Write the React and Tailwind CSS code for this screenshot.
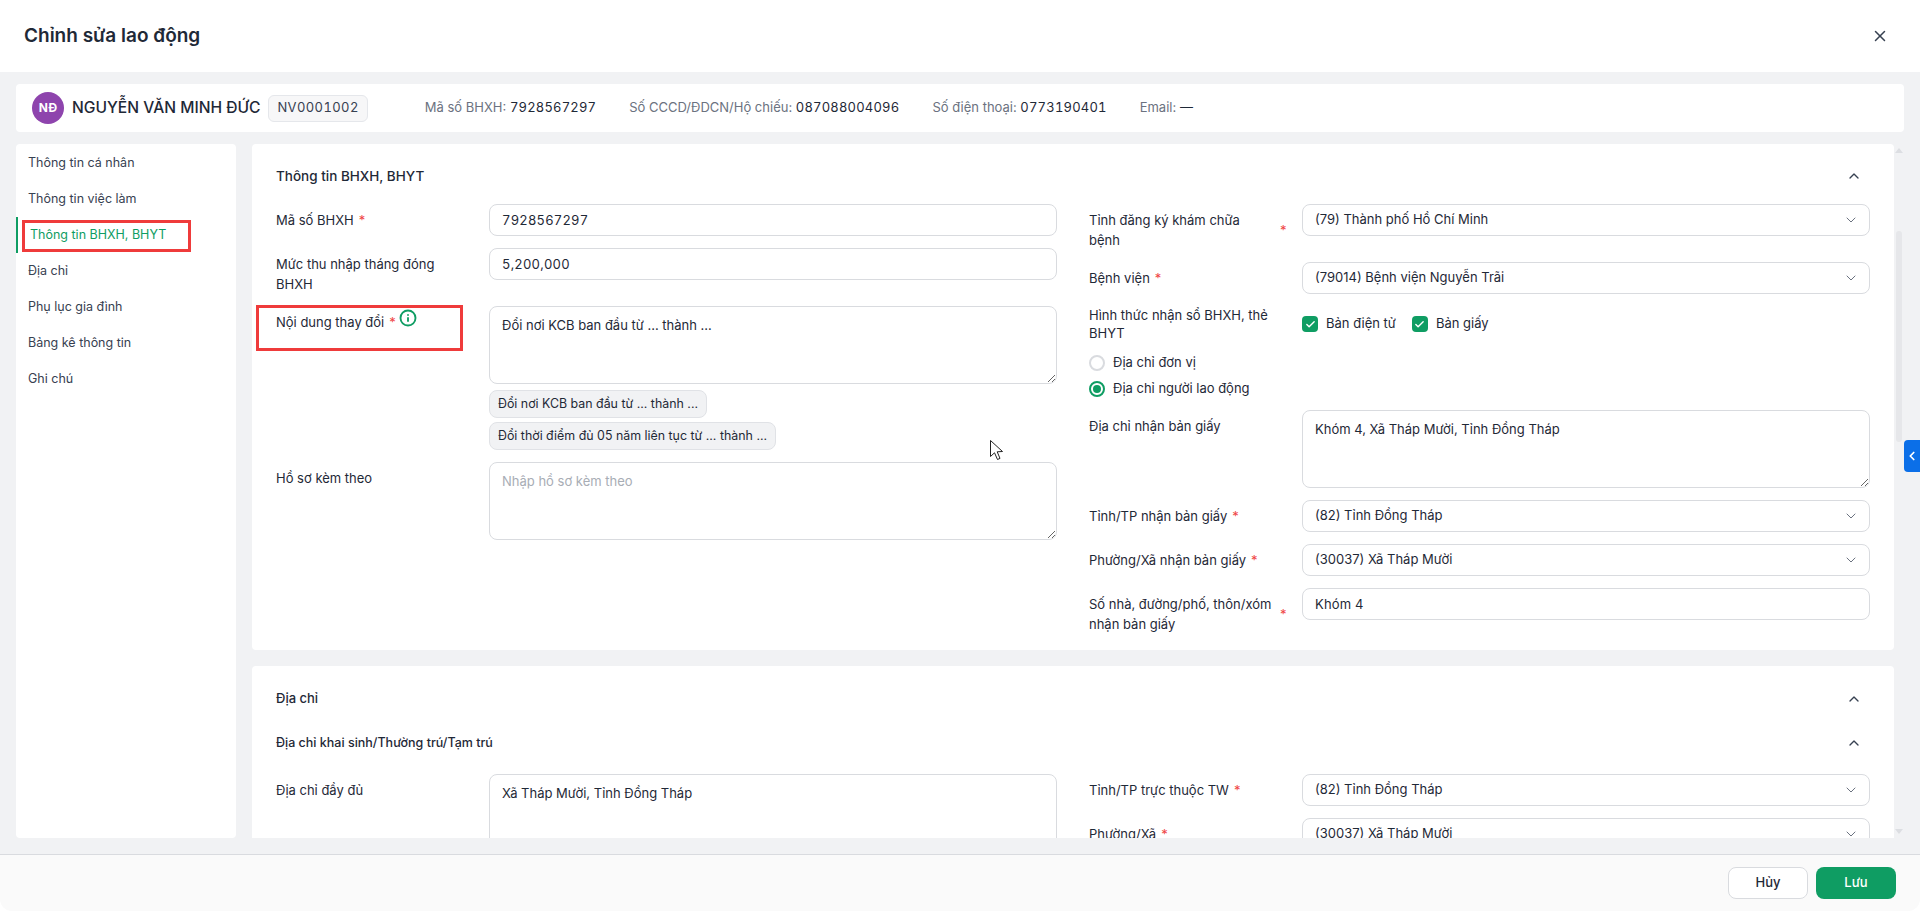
import React from "react";
import { X, ChevronUp, ChevronDown, ChevronLeft, Info, Check } from "lucide-react";

const menu = ["Thông tin cá nhân", "Thông tin việc làm", "Thông tin BHXH, BHYT", "Địa chỉ", "Phụ lục gia đình", "Bảng kê thông tin", "Ghi chú"];

function Label({ text, required, extra, wide }) {
    return (
        <div className="flex items-center self-start pt-1.5 pr-4 text-[13px] leading-5 text-[#1f2937]">
            <span className={wide ? "w-[186px]" : "max-w-[190px]"}>{text}</span>
            {required && <span className="ml-[5px] w-1.5 shrink-0 text-[#ef4444]">*</span>}
            {extra}
        </div>
    );
}

function Row({ label, required, extra, wide, children }) {
    return (
        <div className="grid grid-cols-[213px_1fr]">
            <Label text={label} required={required} extra={extra} wide={wide} />
            <div className="min-w-0">{children}</div>
        </div>
    );
}

function TextInput({ value }) {
    return (
        <input
            readOnly
            value={value}
            className="block h-8 w-full rounded-lg border border-[#d9dbdf] bg-white px-3 text-[13px] tabular-nums tracking-[0.2px] text-[#1f2937] outline-none"
        />
    );
}

function SelectBox({ value }) {
    return (
        <div className="flex h-8 items-center justify-between rounded-lg border border-[#d9dbdf] bg-white pl-3 pr-2.5 text-[13px] text-[#1f2937]">
            <span>{value}</span>
            <ChevronDown size={16} strokeWidth={1.5} className="text-[#6b7280]" />
        </div>
    );
}

function Area({ value, placeholder }) {
    return (
        <textarea
            readOnly
            defaultValue={value}
            placeholder={placeholder}
            className="block h-[78px] w-full rounded-lg border border-[#d9dbdf] bg-white px-3 py-2 text-[13px] leading-5 text-[#1f2937] outline-none placeholder:text-[#a8adb5]"
        />
    );
}

function Chip({ text }) {
    return (
        <div className="flex h-7 w-fit items-center rounded-lg border border-[#e0e2e6] bg-[#f1f2f4] px-2 text-[12.4px] text-[#1f2937]">
            {text}
        </div>
    );
}

function CheckItem({ text }) {
    return (
        <div className="flex items-center gap-2">
            <span className="flex h-4 w-4 items-center justify-center rounded bg-[#0f9d63] text-white">
                <Check size={11} strokeWidth={3} />
            </span>
            <span className="text-[13px] text-[#1f2937]">{text}</span>
        </div>
    );
}

function RadioItem({ text, checked }) {
    return (
        <div className="flex h-[26px] items-center gap-2">
            {checked ? (
                <span className="flex h-4 w-4 items-center justify-center rounded-full border-2 border-[#0f9d63] bg-white">
                    <span className="h-2 w-2 rounded-full bg-[#0f9d63]"></span>
                </span>
            ) : (
                <span className="h-4 w-4 rounded-full border-2 border-[#d9dbdf] bg-white"></span>
            )}
            <span className="text-[13px] text-[#1f2937]">{text}</span>
        </div>
    );
}

function Meta({ label, value }) {
    return (
        <div className="text-[13px] text-[#6b7280]">
            {label}: <span className="tabular-nums tracking-[0.2px] text-[#1f2937]">{value}</span>
        </div>
    );
}

export default function App() {
    return (
        <div className="relative flex h-[911px] flex-col overflow-hidden rounded-b-xl bg-white font-['Inter',sans-serif]">
            <header className="flex h-[72px] shrink-0 items-center justify-between pl-6 pr-[31px]">
                <h1 className="text-[19px] font-semibold text-[#1f2937]">Chỉnh sửa lao động</h1>
                <X size={18} className="text-[#374151]" />
            </header>

            <main className="flex min-h-0 flex-1 flex-col gap-3 bg-[#f1f2f4] px-4 pt-3 pb-4">
                <div className="flex h-12 shrink-0 items-center rounded bg-white pl-4">
                    <span className="flex h-8 w-8 items-center justify-center rounded-full bg-[#8e44ad] text-[12px] font-bold text-white">NĐ</span>
                    <span className="ml-2 text-[15.6px] font-medium text-[#1f2937]">NGUYỄN VĂN MINH ĐỨC</span>
                    <span className="ml-2 flex h-[27px] items-center rounded-md border border-[#e5e7eb] bg-[#f7f7f8] px-2 text-[13px] tabular-nums tracking-[0.4px] text-[#374151]">NV0001002</span>
                    <div className="ml-[57px] flex gap-[33px]">
                        <Meta label="Mã số BHXH" value="7928567297" />
                        <Meta label="Số CCCD/ĐDCN/Hộ chiếu" value="087088004096" />
                        <Meta label="Số điện thoại" value="0773190401" />
                        <Meta label="Email" value="—" />
                    </div>
                </div>

                <div className="flex min-h-0 flex-1 gap-4">
                    <nav className="w-[220px] shrink-0 rounded-sm bg-white pt-px">
                        {menu.map((item, i) => (
                            <div
                                key={item}
                                className={i === 2
                                    ? "flex h-9 items-center border-l-2 border-[#0f9d63] pl-3 text-[12.5px] text-[#0f9d63]"
                                    : "flex h-9 items-center pl-3 text-[12.5px] text-[#374151]"}
                            >
                                {item}
                            </div>
                        ))}
                    </nav>

                    <div className="flex min-h-0 min-w-0 flex-1">
                        <div className="flex min-h-0 min-w-0 flex-1 flex-col gap-4 overflow-hidden">
                            <section className="shrink-0 rounded bg-white px-6 pt-[22px] pb-4">
                                <div className="mb-[18px] flex h-5 items-center justify-between pr-2">
                                    <h2 className="text-[13.5px] font-medium text-[#1f2937]">Thông tin BHXH, BHYT</h2>
                                    <ChevronUp size={16} className="text-[#374151]" />
                                </div>
                                <div className="grid grid-cols-2 items-start gap-x-8">
                                    <div className="flex flex-col gap-3">
                                        <Row label="Mã số BHXH" required><TextInput value="7928567297" /></Row>
                                        <Row label="Mức thu nhập tháng đóng BHXH"><TextInput value="5,200,000" /></Row>
                                        <Row
                                            label="Nội dung thay đổi"
                                            required
                                            extra={<Info size={18} strokeWidth={2.5} className="relative -top-1 ml-1 text-[#0f9d63]" />}
                                        >
                                            <Area value="Đổi nơi KCB ban đầu từ ... thành ..." />
                                            <div className="mt-1.5 flex flex-col gap-1">
                                                <Chip text="Đổi nơi KCB ban đầu từ ... thành ..." />
                                                <Chip text="Đổi thời điểm đủ 05 năm liên tục từ ... thành ..." />
                                            </div>
                                        </Row>
                                        <Row label="Hồ sơ kèm theo"><Area placeholder="Nhập hồ sơ kèm theo" /></Row>
                                    </div>

                                    <div className="flex flex-col gap-3">
                                        <Row label={<>Tỉnh đăng ký khám chữa<br />bệnh</>} required wide><SelectBox value="(79) Thành phố Hồ Chí Minh" /></Row>
                                        <Row label="Bệnh viện" required><SelectBox value="(79014) Bệnh viện Nguyễn Trãi" /></Row>
                                        <div>
                                            <div className="grid grid-cols-[213px_1fr]">
                                                <div className="max-w-[190px] text-[13px] leading-[18px] text-[#1f2937]">Hình thức nhận sổ BHXH, thẻ BHYT</div>
                                                <div className="flex h-9 items-center gap-4">
                                                    <CheckItem text="Bản điện tử" />
                                                    <CheckItem text="Bản giấy" />
                                                </div>
                                            </div>
                                            <div className="mt-2 mb-[-4px]">
                                                <RadioItem text="Địa chỉ đơn vị" />
                                                <RadioItem text="Địa chỉ người lao động" checked />
                                            </div>
                                        </div>
                                        <Row label="Địa chỉ nhận bản giấy"><Area value="Khóm 4, Xã Tháp Mười, Tỉnh Đồng Tháp" /></Row>
                                        <Row label="Tỉnh/TP nhận bản giấy" required><SelectBox value="(82) Tỉnh Đồng Tháp" /></Row>
                                        <Row label="Phường/Xã nhận bản giấy" required><SelectBox value="(30037) Xã Tháp Mười" /></Row>
                                        <Row label="Số nhà, đường/phố, thôn/xóm nhận bản giấy" required wide><TextInput value="Khóm 4" /></Row>
                                    </div>
                                </div>
                            </section>

                            <section className="shrink-0 rounded bg-white px-6 pt-[23px] pb-4">
                                <div className="flex h-5 items-center justify-between pr-2">
                                    <h2 className="text-[13px] font-medium text-[#1f2937]">Địa chỉ</h2>
                                    <ChevronUp size={16} className="text-[#374151]" />
                                </div>
                                <div className="mt-6 mb-[21px] flex h-5 items-center justify-between pr-2">
                                    <h3 className="text-[12.5px] font-medium text-[#1f2937]">Địa chỉ khai sinh/Thường trú/Tạm trú</h3>
                                    <ChevronUp size={16} className="text-[#374151]" />
                                </div>
                                <div className="grid grid-cols-2 items-start gap-x-8">
                                    <Row label="Địa chỉ đầy đủ"><Area value="Xã Tháp Mười, Tỉnh Đồng Tháp" /></Row>
                                    <div className="flex flex-col gap-3">
                                        <Row label="Tỉnh/TP trực thuộc TW" required><SelectBox value="(82) Tỉnh Đồng Tháp" /></Row>
                                        <Row label="Phường/Xã" required><SelectBox value="(30037) Xã Tháp Mười" /></Row>
                                    </div>
                                </div>
                            </section>
                        </div>

                        {/* scrollbar */}
                        <div className="flex w-2.5 shrink-0 flex-col items-center justify-between py-1">
                            <div className="h-0 w-0 border-x-[4px] border-b-[5px] border-x-transparent border-b-[#dcdee2]"></div>
                            <div className="mb-[309px] h-[211px] w-1.5 rounded-full bg-[#e6e7ea]"></div>
                            <div className="h-0 w-0 border-x-[4px] border-t-[5px] border-x-transparent border-t-[#dcdee2]"></div>
                        </div>
                    </div>
                </div>
            </main>

            <footer className="flex h-[57px] shrink-0 items-center justify-end gap-2 border-t border-[#d9dbdf] bg-[#fafafa] pr-6">
                <button className="h-8 w-20 rounded-lg border border-[#d9dbdf] bg-white text-[13px] font-medium text-[#1f2937]">Hủy</button>
                <button className="h-8 w-20 rounded-lg bg-[#0f9d63] text-[13px] font-medium text-white">Lưu</button>
            </footer>

            {/* annotations over the screenshot */}
            <div className="absolute left-[22px] top-[220px] h-[32px] w-[169px] border-[3px] border-[#ef3b3b]"></div>
            <div className="absolute left-[256px] top-[305px] h-[46px] w-[207px] border-[3px] border-[#ef3b3b]"></div>

            <div className="absolute right-0 top-[440px] flex h-8 w-4 items-center justify-center rounded-l bg-[#0b6fe8] text-white">
                <ChevronLeft size={14} strokeWidth={3} />
            </div>

            <svg className="absolute left-[989px] top-[439px]" width="17" height="22" viewBox="0 0 17 22">
                <path d="M1.5 1.5 L1.5 17.5 L5.5 13.8 L8.5 20.5 L11 19.4 L8.2 12.8 L13.5 12.5 Z" fill="#fff" stroke="#222" strokeWidth="1" strokeLinejoin="round" />
            </svg>
        </div>
    );
}
